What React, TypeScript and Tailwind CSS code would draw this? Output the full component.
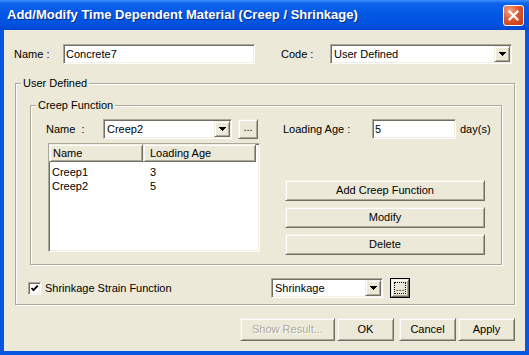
import type { ReactNode } from 'react';

const sunken =
  'border border-t-[#aca899] border-l-[#aca899] border-r-white border-b-white shadow-[inset_1px_1px_0_#716f64,inset_-1px_-1px_0_#f1efe2]';
const raised =
  'border border-t-[#f1efe2] border-l-[#f1efe2] border-r-[#716f64] border-b-[#716f64] shadow-[inset_1px_1px_0_#fff,inset_-1px_-1px_0_#aca899]';

const Arrow = () => (
  <svg width="7" height="4" viewBox="0 0 7 4" shapeRendering="crispEdges">
    <path d="M0 0h7v1h-1v1h-1v1h-1v1h-1v-1h-1v-1h-1v-1h-1z" fill="#000" />
  </svg>
);

const Combo = ({ value, className }: { value: string; className: string }) => (
  <div className={`flex h-[20px] items-center bg-white p-[1px] ${sunken} ${className}`}>
    <span className="flex-1 truncate pl-[2px]">{value}</span>
    <span className={`flex h-full w-[16px] items-center justify-center bg-[#ece9d8] ${raised}`}>
      <Arrow />
    </span>
  </div>
);

const TextBox = ({ value, className }: { value: string; className: string }) => (
  <div className={`flex h-[20px] items-center bg-white pl-[2px] ${sunken} ${className}`}>{value}</div>
);

const Button = ({ label, className, disabled }: { label: string; className: string; disabled?: boolean }) => (
  <div
    className={`flex items-center justify-center bg-[#ece9d8] ${raised} ${className} ${
      disabled ? 'text-[#aca899] [text-shadow:1px_1px_0_#fff]' : ''
    }`}
  >
    {label}
  </div>
);

const Group = ({ label, className, children }: { label: string; className: string; children: ReactNode }) => (
  <div className={`relative border border-[#aca899] shadow-[inset_1px_1px_0_#fff,1px_1px_0_#fff] ${className}`}>
    <span className="absolute left-[5px] top-[-7px] bg-[#ece9d8] px-[2px] leading-[13px]">{label}</span>
    {children}
  </div>
);

const rows = [
  { name: 'Creep1', age: '3' },
  { name: 'Creep2', age: '5' },
];

export default function App() {
  return (
    <div className="flex h-[355px] w-[529px] flex-col font-['Liberation_Sans',Arial,sans-serif]">
      <div className="flex h-[30px] items-center justify-between bg-[linear-gradient(to_bottom,#3d8ef8_0%,#0c62ec_12%,#0458e6_45%,#0053e0_80%,#0047cf_100%)] pl-[7px] pr-[5px]">
        <span className="text-[13px] font-bold text-white [text-shadow:1px_1px_0_#0a2a7a]">
          Add/Modify Time Dependent Material (Creep / Shrinkage)
        </span>
        <div className="flex h-[21px] w-[21px] items-center justify-center rounded-[3px] border border-white bg-[radial-gradient(circle_at_30%_25%,#f2a58a_0%,#e0582d_45%,#c2360f_100%)]">
          <svg width="11" height="11" viewBox="0 0 11 11">
            <path d="M1.5 1.5l8 8M9.5 1.5l-8 8" stroke="#fff" strokeWidth="2.4" strokeLinecap="round" />
          </svg>
        </div>
      </div>

      <div className="flex flex-1 flex-col border-x-4 border-b-4 border-[#0656e2] bg-[#ece9d8] px-[10px] pt-[14px] text-[11px] text-black">
        <div className="flex h-[20px] items-center">
          <span className="w-[49px]">Name :</span>
          <TextBox value="Concrete7" className="w-[192px]" />
          <span className="ml-[26px] w-[49px]">Code :</span>
          <Combo value="User Defined" className="w-[182px]" />
        </div>

        <Group label="User Defined" className="ml-[1px] mt-[19px] h-[222px] w-[500px] pl-[14px] pt-[21px]">
          <Group label="Creep Function" className="flex h-[160px] w-[472px] pl-[15px] pt-[13px]">
            <div className="flex w-[214px] flex-col">
              <div className="flex h-[20px] items-center">
                <span className="w-[57px]">Name &nbsp;:</span>
                <Combo value="Creep2" className="w-[129px]" />
                <Button label="..." className="ml-[6px] h-[20px] w-[20px] pb-[3px]" />
              </div>
              <div className={`ml-[2px] mt-[4px] flex h-[109px] w-[212px] flex-col bg-white ${sunken}`}>
                <div className="flex h-[18px] shrink-0">
                  <div className={`flex w-[94px] items-center pl-[3px] ${raised} bg-[#ece9d8]`}>Name</div>
                  <div className={`flex w-[113px] items-center pl-[6px] ${raised} bg-[#ece9d8]`}>Loading Age</div>
                </div>
                <div className="pt-[2px]">
                  {rows.map((r) => (
                    <div key={r.name} className="grid h-[14px] grid-cols-[94px_1fr] items-center">
                      <span className="pl-[3px]">{r.name}</span>
                      <span className="pl-[7px]">{r.age}</span>
                    </div>
                  ))}
                </div>
              </div>
            </div>

            <div className="ml-[23px] flex flex-col">
              <div className="flex h-[20px] items-center">
                <span className="w-[89px]">Loading Age :</span>
                <TextBox value="5" className="w-[84px]" />
                <span className="ml-[4px]">day(s)</span>
              </div>
              <div className="ml-[2px] mt-[41px] flex flex-col gap-[6px]">
                <Button label="Add Creep Function" className="h-[21px] w-[200px]" />
                <Button label="Modify" className="h-[21px] w-[200px]" />
                <Button label="Delete" className="h-[21px] w-[200px]" />
              </div>
            </div>
          </Group>

          <div className="-ml-[2px] mt-[13px] flex h-[20px] items-center">
            <span className={`flex h-[13px] w-[13px] items-center justify-center bg-white ${sunken}`}>
              <svg width="9" height="9" viewBox="0 0 9 9">
                <path d="M1.5 4l2 2.2L7.8 1.6" stroke="#000" strokeWidth="1.8" fill="none" />
              </svg>
            </span>
            <span className="ml-[4px] w-[226px]">Shrinkage Strain Function</span>
            <Combo value="Shrinkage" className="w-[112px]" />
            <div className="ml-[7px] flex h-[20px] w-[20px] border border-black">
              <div className={`flex flex-1 bg-[#ece9d8] p-[2px] ${raised}`}>
                <div className="flex flex-1 items-end justify-center overflow-visible border border-dotted border-black leading-[11px]">
                  ...
                </div>
              </div>
            </div>
          </div>
        </Group>

        <div className="mt-[13px] flex justify-end">
          <Button label="Show Result..." className="h-[23px] w-[95px]" disabled />
          <Button label="OK" className="ml-[2px] h-[23px] w-[57px]" />
          <Button label="Cancel" className="ml-[5px] h-[23px] w-[57px]" />
          <Button label="Apply" className="ml-[2px] h-[23px] w-[57px]" />
        </div>
      </div>
    </div>
  );
}
